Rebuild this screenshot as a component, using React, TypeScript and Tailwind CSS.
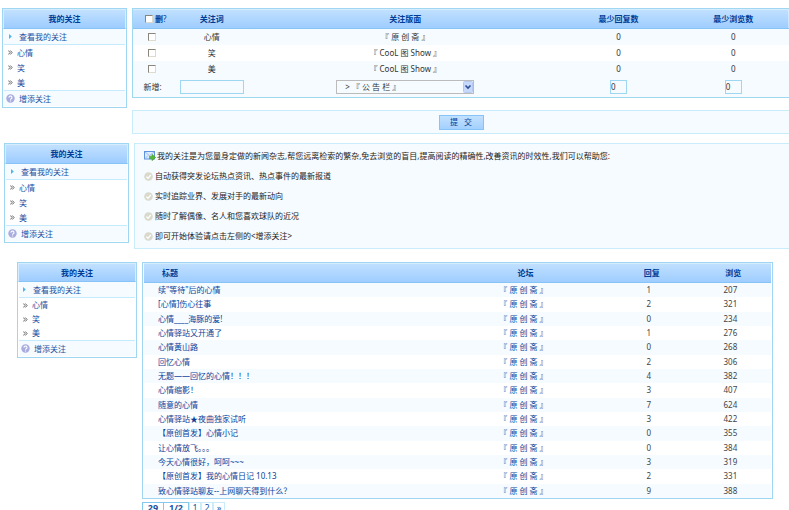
import type { ReactNode } from "react";

const watchWords = ["心情", "笑", "美"];

const watched = [
  { word: "心情", board: "『 原 创 斋 』" },
  { word: "笑", board: "『 CooL 图 Show 』" },
  { word: "美", board: "『 CooL 图 Show 』" },
];

const tips = [
  "自动获得突发论坛热点资讯、热点事件的最新报道",
  "实时追踪业界、发展对手的最新动向",
  "随时了解偶像、名人和您喜欢球队的近况",
  "即可开始体验请点击左侧的<增添关注>",
];

const threads: [string, number, number][] = [
  ["续\"等待\"后的心情", 1, 207],
  ["[心情]伤心往事", 2, 321],
  ["心情____海豚的爱!", 0, 234],
  ["心情驿站又开通了", 1, 276],
  ["心情黄山路", 0, 268],
  ["回忆心情", 2, 306],
  ["无题——回忆的心情！！！", 4, 382],
  ["心情缩影！", 3, 407],
  ["随意的心情", 7, 624],
  ["心情驿站★夜曲独家试听", 3, 422],
  ["【原创首发】心情小记", 0, 355],
  ["让心情放飞。。。", 0, 384],
  ["今天心情很好，呵呵~~~", 3, 319],
  ["【原创首发】我的心情日记 10.13", 2, 331],
  ["致心情驿站聊友--上网聊天得到什么？", 9, 388],
];

const headerStyle =
  "border border-[#d6ecff] border-b-[#86c3f7] bg-linear-to-b from-[#c2e1ff] to-[#9dccff] font-bold text-[#003c96]";

function HelpIcon() {
  return (
    <svg viewBox="0 0 9 9" className="size-[9px] shrink-0" aria-hidden="true">
      <circle cx="4.5" cy="4.5" r="4.2" fill="#a9acdf" />
      <path d="M3 3.6a1.5 1.4 0 1 1 2.2 1.1q-.7.3-.7 1M4.5 6.5v.9" fill="none" stroke="#fff" strokeWidth="1.1" />
    </svg>
  );
}

function CheckIcon() {
  return (
    <svg viewBox="0 0 9 9" className="size-[9px] shrink-0" aria-hidden="true">
      <circle cx="4.5" cy="4.5" r="4.3" fill="#d9d9cc" />
      <path d="M2.3 4.6l1.7 1.6 2.9-3.3" fill="none" stroke="#fff" strokeWidth="1.3" />
    </svg>
  );
}

function MailIcon() {
  return (
    <svg viewBox="0 0 12 10" className="h-[10px] w-[12px] shrink-0" aria-hidden="true">
      <rect x=".5" y=".5" width="10" height="7.5" fill="#dcebff" stroke="#5f93dd" />
      <path d="M1 1l4.5 3.600L10 1M1 7.700l3-3.200" fill="none" stroke="#8db4ea" strokeWidth=".8" />
      <path d="M5.500 5.200h2.500V3.300L11.700 6.500 8 9.700V7.800H5.500z" fill="#55b83a" stroke="#3d9a2c" strokeWidth=".5" />
    </svg>
  );
}

function Arrow({ className, double }: { className: string; double?: boolean }) {
  return (
    <svg viewBox="0 0 5 5" className={`size-[5px] shrink-0 ${className}`} aria-hidden="true">
      {double ? (
        <path d="M.3.500l1.800 2-1.800 2M2.300.500l1.800 2-1.800 2" fill="none" stroke="currentColor" />
      ) : (
        <path d="M1 0l2.800 2.500L1 5z" fill="currentColor" />
      )}
    </svg>
  );
}

function WatchMenu({ compact, className }: { compact?: boolean; className: string }) {
  return (
    <nav className={`shrink-0 border border-[#9fd6f2] bg-white text-[8px] text-[#1d50a2] ${className}`}>
      <h2 className={`flex items-center justify-center ${compact ? "h-[19px]" : "h-5"} ${headerStyle}`}>我的关注</h2>
      <a
        href="#view"
        className={`mx-px flex h-4 items-center border-b border-[#c4eafd] bg-[#f5fbff] ${compact ? "pl-[3px]" : "pl-1"}`}
      >
        <Arrow className="mr-[6px] text-[#4bb5ee]" />
        查看我的关注
      </a>
      <ul>
        {watchWords.map((word) => (
          <li key={word}>
            <a href="#word" className={`flex items-center pl-[5px] ${compact ? "h-[14px]" : "h-[15px]"}`}>
              <Arrow double className="mr-1 text-[#666]" />
              {word}
            </a>
          </li>
        ))}
      </ul>
      <a href="#add" className="mx-px mb-px flex h-4 items-center border-t border-[#c4eafd] bg-[#f5fbff] pl-[2px]">
        <HelpIcon />
        <span className="ml-1">增添关注</span>
      </a>
    </nav>
  );
}

function Check({ label }: { label: string }) {
  return (
    <input
      type="checkbox"
      aria-label={label}
      className="block size-2 shrink-0 appearance-none border border-[#dedacd] border-t-[#8a867c] border-l-[#8a867c] bg-white"
    />
  );
}

function Cell({ children }: { children: ReactNode }) {
  return <td className="p-0 text-center">{children}</td>;
}

const headCell = "border-y border-t-[#d6ecff] border-b-[#86c3f7] p-0";
const numberBox = "h-[14px] w-[17px] border border-[#9fd6f2] p-0 align-middle";

function WatchForm() {
  return (
    <form className="min-w-0 flex-1" onSubmit={(e) => e.preventDefault()}>
      <div className="border-y border-l border-[#9fd6f2] bg-[#f5fbff] pb-px">
        <table className="w-full table-fixed border-separate border-spacing-0 text-[8px]">
          <colgroup>
            <col className="w-[6%]" />
            <col className="w-[12%]" />
            <col className="w-[47%]" />
            <col className="w-[18%]" />
            <col className="w-[17%]" />
          </colgroup>
          <thead>
            <tr className="h-5 bg-linear-to-b from-[#c2e1ff] to-[#9dccff] text-[#003c96]">
              <th className={headCell}>
                <label className="flex items-center gap-[2px] pl-3">
                  <Check label="全选" />
                  <span className="whitespace-nowrap">
                    删<span className="font-normal">?</span>
                  </span>
                </label>
              </th>
              {["关注词", "关注版面", "最少回复数", "最少浏览数"].map((h) => (
                <th key={h} className={headCell}>
                  {h}
                </th>
              ))}
            </tr>
          </thead>
          <tbody className="text-[#333]">
            {watched.map((row) => (
              <tr key={row.word} className="h-4 even:bg-white">
                <td className="p-0 pl-[15px]">
                  <Check label={row.word} />
                </td>
                <Cell>{row.word}</Cell>
                <Cell>{row.board}</Cell>
                <Cell>0</Cell>
                <Cell>0</Cell>
              </tr>
            ))}
            <tr className="h-[19px]">
              <Cell>
                <label htmlFor="word">新增:</label>
              </Cell>
              <Cell>
                <input id="word" className="h-[14px] w-16 border border-[#9fd6f2] px-px align-middle" />
              </Cell>
              <Cell>
                <span className="relative inline-block align-middle">
                  <select
                    aria-label="关注版面"
                    className="block h-[14px] w-[138px] appearance-none border border-[#bbb] bg-transparent pl-2"
                  >
                    <option>&gt; 『 公 告 栏 』</option>
                  </select>
                  <svg viewBox="0 0 10 12" className="pointer-events-none absolute top-px right-px h-3 w-[10px]" aria-hidden="true">
                    <rect x=".5" y=".5" width="9" height="11" rx="1" fill="#c6d8fb" stroke="#b4c8f0" />
                    <path d="M2.500 4.500L5 7l2.500-2.500" fill="none" stroke="#2d4e94" strokeWidth="1.600" />
                  </svg>
                </span>
              </Cell>
              <Cell>
                <input aria-label="最少回复数" defaultValue="0" className={numberBox} />
              </Cell>
              <Cell>
                <input aria-label="最少浏览数" defaultValue="0" className={numberBox} />
              </Cell>
            </tr>
          </tbody>
        </table>
      </div>
      <div className="mt-3 flex h-6 items-center justify-center border-y border-l border-[#c9ecfb] bg-[#f5fbff]">
        <button
          type="submit"
          className="h-[15px] w-[45px] border border-[#86c3f7] bg-linear-to-b from-[#c2e1ff] to-[#a3d0ff] text-[8px] text-[#003c96]"
        >
          提&nbsp;&nbsp;&nbsp;交
        </button>
      </div>
    </form>
  );
}

function ThreadTable() {
  return (
    <div className="border border-[#9fd6f2] px-px">
      <table className="h-[235px] w-full table-fixed border-separate border-spacing-0 text-[8px]">
        <colgroup>
          <col className="w-[48%]" />
          <col className="w-[26%]" />
          <col className="w-[14%]" />
          <col className="w-[12%]" />
        </colgroup>
        <thead>
          <tr className="h-5 bg-linear-to-b from-[#c2e1ff] to-[#9dccff] text-[#003c96]">
            <th className={`${headCell} pl-[18px] text-left`}>标题</th>
            <th className={`${headCell} pr-[2px]`}>论坛</th>
            <th className={headCell}>回复</th>
            <th className={headCell}>浏览</th>
          </tr>
        </thead>
        <tbody className="text-[#444]">
          {threads.map(([title, replies, views]) => (
            <tr key={title} className="odd:bg-[#f5fbff]">
              <td className="p-0 pl-[14px]">
                <a href="#thread" className="text-[#0a3f9a]">
                  {title}
                </a>
              </td>
              <td className="p-0 pr-[6px] text-center">
                <a href="#board" className="text-[#0a3f9a]">
                  『 原 创 斋 』
                </a>
              </td>
              <td className="p-0 pr-[6px] text-center">{replies}</td>
              <td className="p-0 pr-[6px] text-center">{views}</td>
            </tr>
          ))}
        </tbody>
      </table>
    </div>
  );
}

function Pager() {
  const box = "w-3 border border-[#c9ecfb] text-center";
  const total = "border border-[#86c9ee] text-center font-bold";
  return (
    <nav className="mt-[3px] flex h-4 text-[9px] leading-[10px] text-[#1d50a2]">
      <span className={`${total} w-[22px]`}>29</span>
      <span className={`${total} w-[25px] border-l-0`}>1/2</span>
      <a href="#1" className={box}>1</a>
      <a href="#2" className={box}>2</a>
      <a href="#next" className={box}>»</a>
    </nav>
  );
}

export default function App() {
  return (
    <main className="h-screen overflow-hidden bg-white pt-2 font-['Noto_Sans','Noto_Sans_CJK_SC',sans-serif] leading-3">
      <section className="flex items-start gap-[5px] pl-[2px]">
        <WatchMenu className="w-[125px]" />
        <WatchForm />
      </section>

      <section className="mt-[9px] flex items-start gap-[5px] pl-1">
        <WatchMenu className="w-[125px]" />
        <div className="min-w-0 flex-1 border-y border-l border-[#c9ecfb] bg-[#f5fbff] py-[2px] pl-[9px] text-[8px] text-[#222]">
          <p className="flex h-5 items-center gap-px">
            <MailIcon />
            我的关注是为您量身定做的新闻杂志,帮您远离检索的繁杂,免去浏览的盲目,提高阅读的精确性,改善资讯的时效性,我们可以帮助您:
          </p>
          <ul>
            {tips.map((tip) => (
              <li key={tip} className="flex h-5 items-center gap-[2px]">
                <CheckIcon />
                {tip}
              </li>
            ))}
          </ul>
        </div>
      </section>

      <section className="mt-[13px] flex items-start gap-[5px] pr-4 pl-[17px]">
        <WatchMenu compact className="w-[120px]" />
        <div className="min-w-0 flex-1">
          <ThreadTable />
          <Pager />
        </div>
      </section>
    </main>
  );
}
